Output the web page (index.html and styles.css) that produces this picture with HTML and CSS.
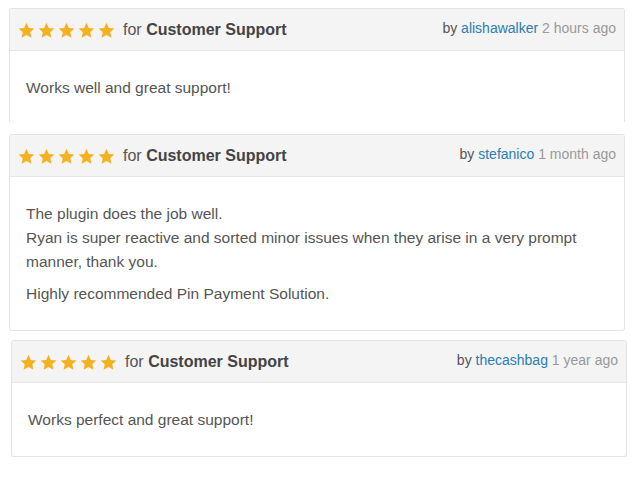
FILE: index.html
```html
<!DOCTYPE html>
<html>
<head>
<meta charset="utf-8">
<link rel="stylesheet" href="styles.css">
</head>
<body>
<svg width="0" height="0" class="defs">
  <defs>
    <symbol id="star" viewBox="0 0 24 24">
      <path d="M12 1.2l3.3 7.1 7.8.9-5.8 5.3 1.6 7.7L12 18.3l-6.9 3.9 1.6-7.7-5.8-5.3 7.8-.9z" fill="#f4b223"/>
    </symbol>
  </defs>
</svg>
<div class="list">
  <div class="review review--cut">
    <div class="review-head">
      <div class="rating">
        <span class="stars"><svg><use href="#star"/></svg><svg><use href="#star"/></svg><svg><use href="#star"/></svg><svg><use href="#star"/></svg><svg><use href="#star"/></svg></span>
        <span class="for">for <b>Customer Support</b></span>
      </div>
      <div class="meta">by <a href="#">alishawalker</a> <span class="time">2 hours ago</span></div>
    </div>
    <div class="review-body">
      <p>Works well and great support!</p>
    </div>
  </div>

  <div class="review">
    <div class="review-head">
      <div class="rating">
        <span class="stars"><svg><use href="#star"/></svg><svg><use href="#star"/></svg><svg><use href="#star"/></svg><svg><use href="#star"/></svg><svg><use href="#star"/></svg></span>
        <span class="for">for <b>Customer Support</b></span>
      </div>
      <div class="meta">by <a href="#">stefanico</a> <span class="time">1 month ago</span></div>
    </div>
    <div class="review-body">
      <p>The plugin does the job well.<br>Ryan is super reactive and sorted minor issues when they arise in a very prompt manner, thank you.</p>
      <p>Highly recommended Pin Payment Solution.</p>
    </div>
  </div>

  <div class="review review--shift">
    <div class="review-head">
      <div class="rating">
        <span class="stars"><svg><use href="#star"/></svg><svg><use href="#star"/></svg><svg><use href="#star"/></svg><svg><use href="#star"/></svg><svg><use href="#star"/></svg></span>
        <span class="for">for <b>Customer Support</b></span>
      </div>
      <div class="meta">by <a href="#">thecashbag</a> <span class="time">1 year ago</span></div>
    </div>
    <div class="review-body">
      <p>Works perfect and great support!</p>
    </div>
  </div>
</div>
</body>
</html>
```
FILE: styles.css
```css
html, body {
  margin: 0;
  padding: 0;
  background: #fff;
}
body {
  font-family: "Liberation Sans", Arial, sans-serif;
  color: #555;
}
.defs {
  position: absolute;
  width: 0;
  height: 0;
}
.list {
  display: flex;
  flex-direction: column;
  gap: 12px;
  padding: 8px 0 0 9px;
}
.review {
  width: 616px;
  box-sizing: border-box;
  border: 1px solid #e3e3e3;
  border-radius: 3px;
  background: #fff;
}
.review--cut {
  border-bottom: none;
  border-radius: 3px 3px 0 0;
}
.review--cut .review-body {
  padding-bottom: 22px;
}
.review--shift {
  margin-left: 2px;
  margin-top: -3px;
  box-shadow: 0 3px 0 #f3f3f3;
}
.review-head {
  display: flex;
  justify-content: space-between;
  align-items: center;
  height: 41px;
  padding: 0 8px;
  background: #f4f4f4;
  border-bottom: 1px solid #e6e6e6;
  border-radius: 3px 3px 0 0;
}
.rating {
  display: flex;
  align-items: center;
  padding-top: 1px;
}
.stars {
  display: flex;
  gap: 3px;
  margin-right: 8px;
}
.stars svg {
  width: 17px;
  height: 17px;
  display: block;
}
.for {
  font-size: 16px;
  color: #555;
}
.for b {
  color: #444;
}
.meta {
  font-size: 14px;
  color: #555;
  margin-bottom: 4px;
}
.meta a {
  color: #2a7db5;
  text-decoration: none;
}
.time {
  color: #999;
}
.review-body {
  padding: 25px 16px 24px;
  font-size: 15.5px;
  line-height: 24px;
}
.review-body p {
  margin: 0 0 8px;
}
.review-body p:last-child {
  margin-bottom: 0;
}
```
